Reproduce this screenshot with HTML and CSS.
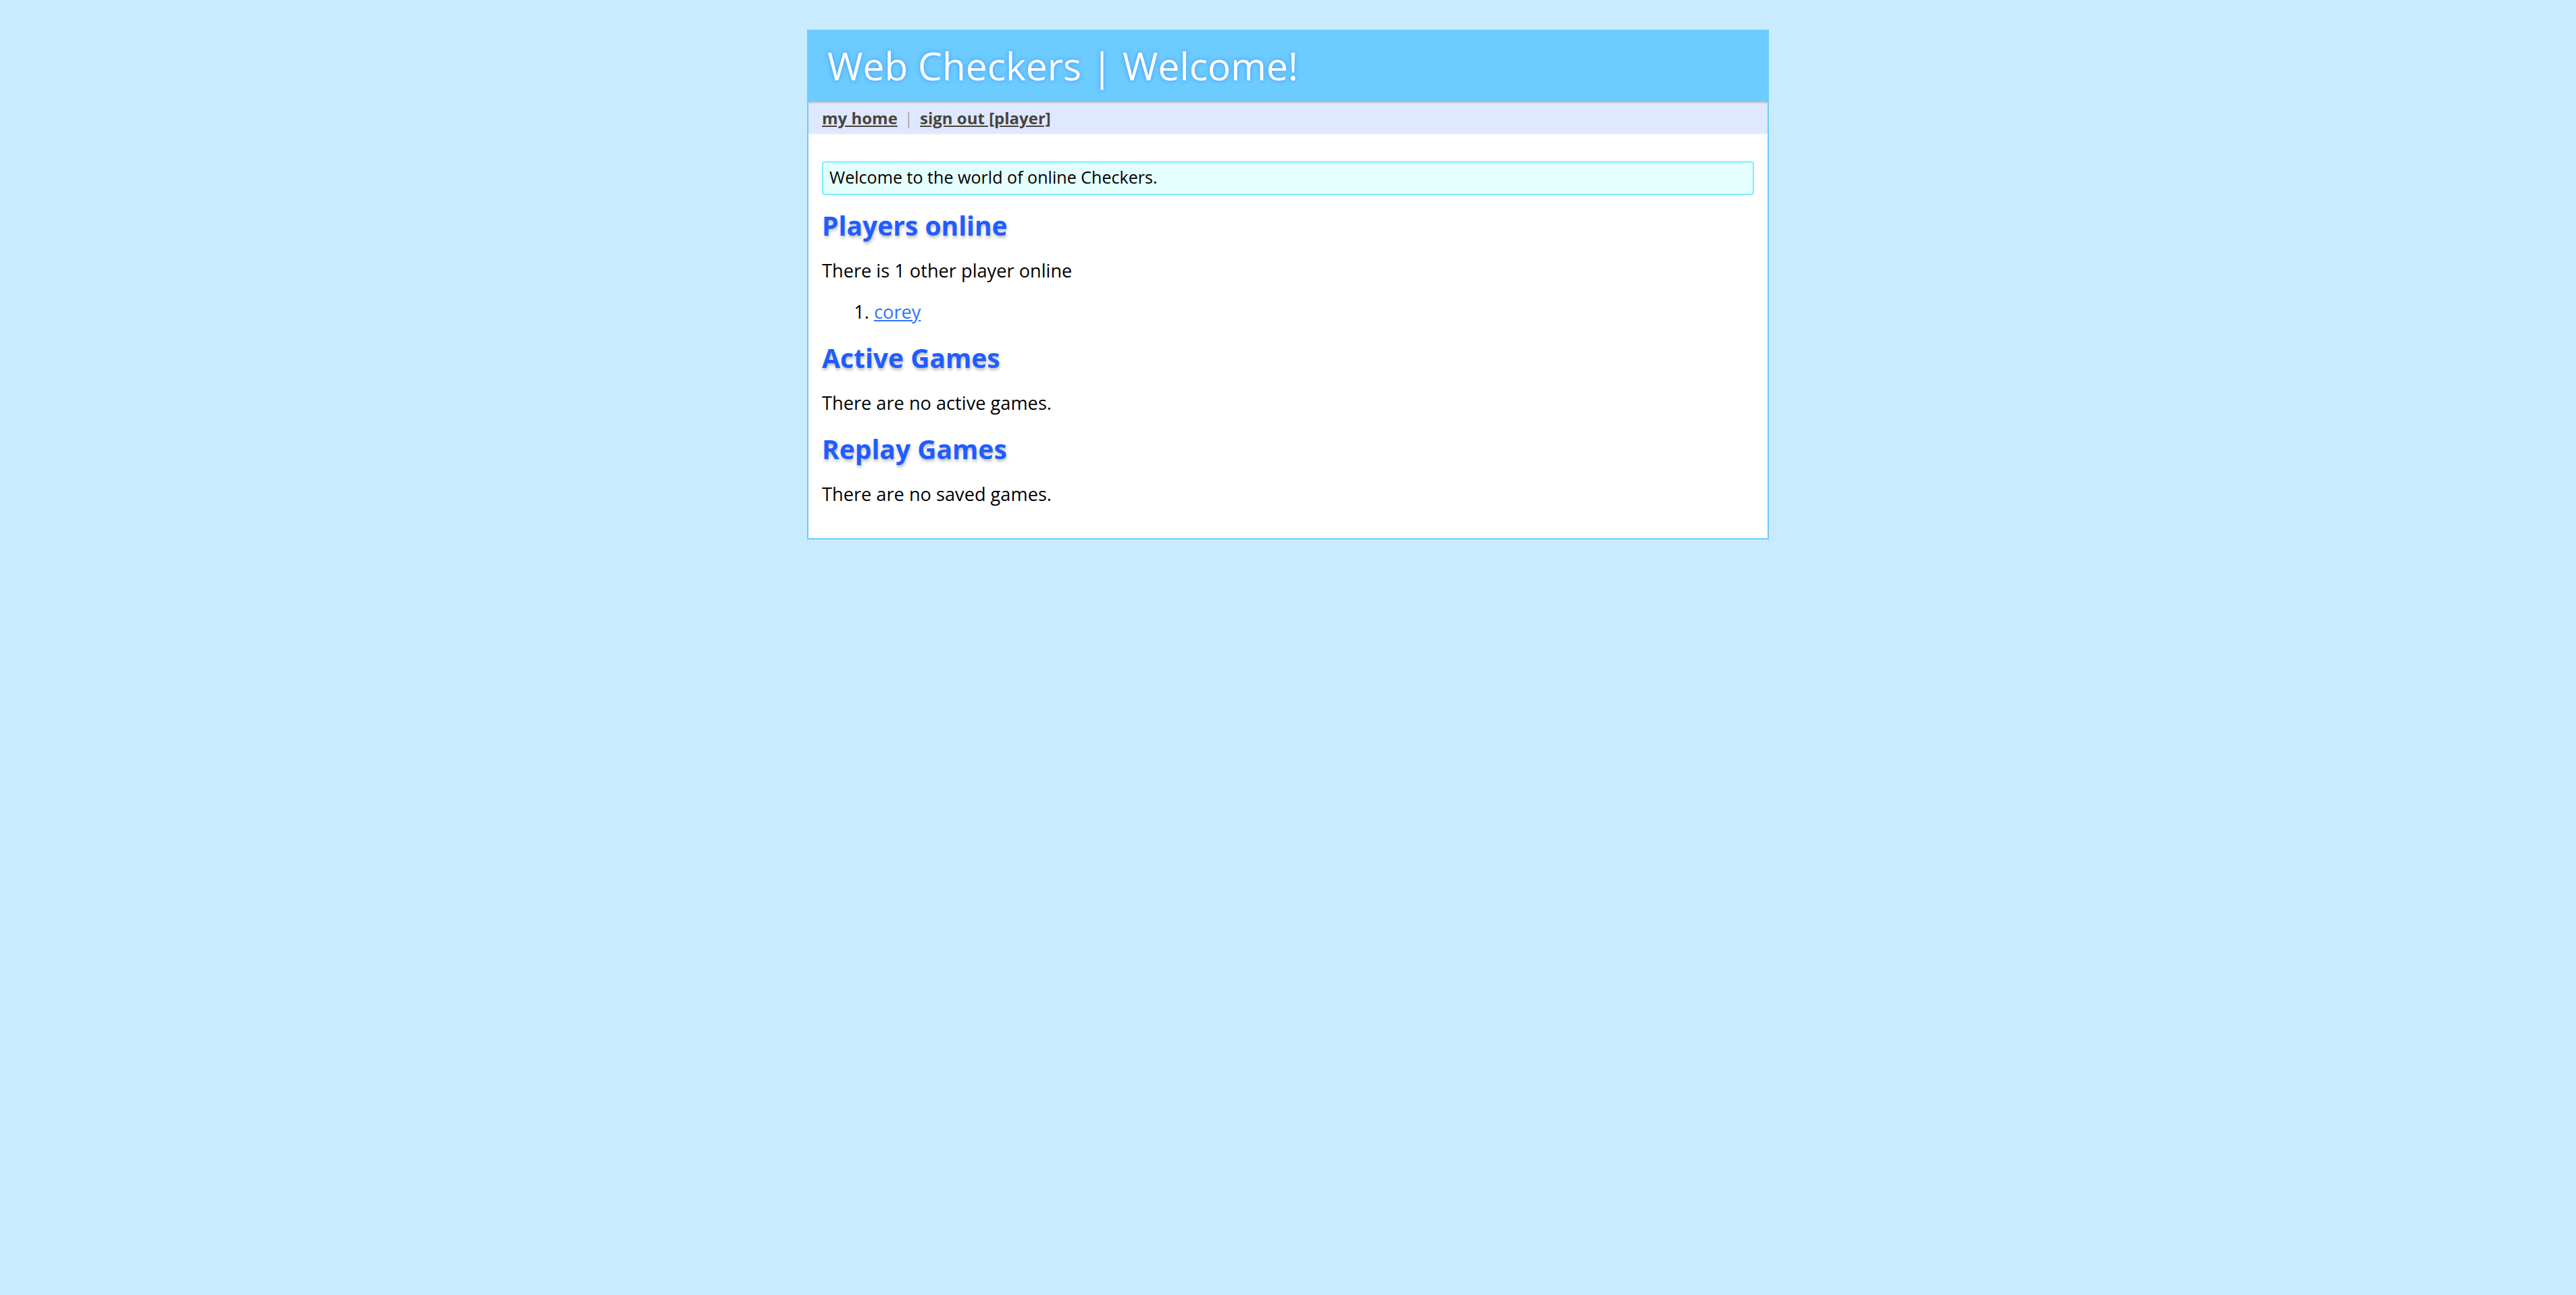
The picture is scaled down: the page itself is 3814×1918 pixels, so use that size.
FILE: index.html
```html
<!DOCTYPE html>
<html lang="en">
<head>
<meta charset="utf-8">
<title>Web Checkers | Welcome!</title>
<link rel="stylesheet" href="styles.css">
</head>
<body>
<div class="page">
  <header class="header">
    <h1 class="title">Web Checkers | Welcome!</h1>
  </header>
  <div class="main">
    <nav class="nav">
      <a class="nav-link" href="#">my home</a><span class="sep">|</span><a class="nav-link" href="#">sign out [player]</a>
    </nav>
    <div class="content">
      <div class="message">Welcome to the world of online Checkers.</div>
      <h2 class="section-title">Players online</h2>
      <p class="text">There is 1 other player online</p>
      <ol class="players">
        <li class="player"><a class="player-link" href="#">corey</a></li>
      </ol>
      <h2 class="section-title">Active Games</h2>
      <p class="text">There are no active games.</p>
      <h2 class="section-title">Replay Games</h2>
      <p class="text">There are no saved games.</p>
    </div>
  </div>
</div>
</body>
</html>
```
FILE: styles.css
```css
html, body {
  margin: 0;
  padding: 0;
}

body {
  background: #c8ebfe;
  font-family: "Open Sans", "Noto Sans", sans-serif;
  color: #000;
}

.page {
  width: 1424px;
  margin: 44px auto 0;
}

.header {
  background: #6ccbff;
  height: 107px;
}

.title {
  margin: 0;
  padding-left: 30px;
  font-size: 56.9px;
  font-weight: normal;
  line-height: 107px;
  color: #fff;
  text-shadow: 0 0 6px #3f97ff;
}

.main {
  background: #fff;
  border: 2px solid #6ccbff;
  border-top: none;
}

.nav {
  background: #dee8fe;
  border-top: 2px solid #cccccc;
  border-bottom: 2px solid #ececec;
  height: 44px;
  line-height: 44px;
  padding: 0 20px;
  font-size: 24px;
  font-weight: bold;
  white-space: nowrap;
}

.nav-link {
  color: #48443c;
  text-decoration: underline;
}

.sep {
  color: #aaaaaa;
  font-weight: normal;
  margin: 0 10px;
}

.content {
  padding: 20px 20px 20px;
}

.message {
  margin: 20px 0 0;
  background: #e5ffff;
  border: 2px solid #80ebff;
  border-radius: 4px;
  padding: 7px 9px 10px;
  font-size: 25.1px;
  line-height: 29px;
}

.section-title {
  margin: 22px 0 28px;
  font-size: 39px;
  line-height: 46px;
  font-weight: bold;
  color: #1f5dff;
  text-shadow: 1px 3px 4px rgba(0, 0, 0, 0.28);
}

.text {
  margin: 28px 0 29px;
  font-size: 27.2px;
  line-height: 32px;
}

.players {
  margin: 29px 0 29px;
  padding-left: 77px;
  font-size: 27.2px;
  line-height: 32px;
}

.player-link {
  color: #2f73ff;
  text-decoration: underline;
}
```
